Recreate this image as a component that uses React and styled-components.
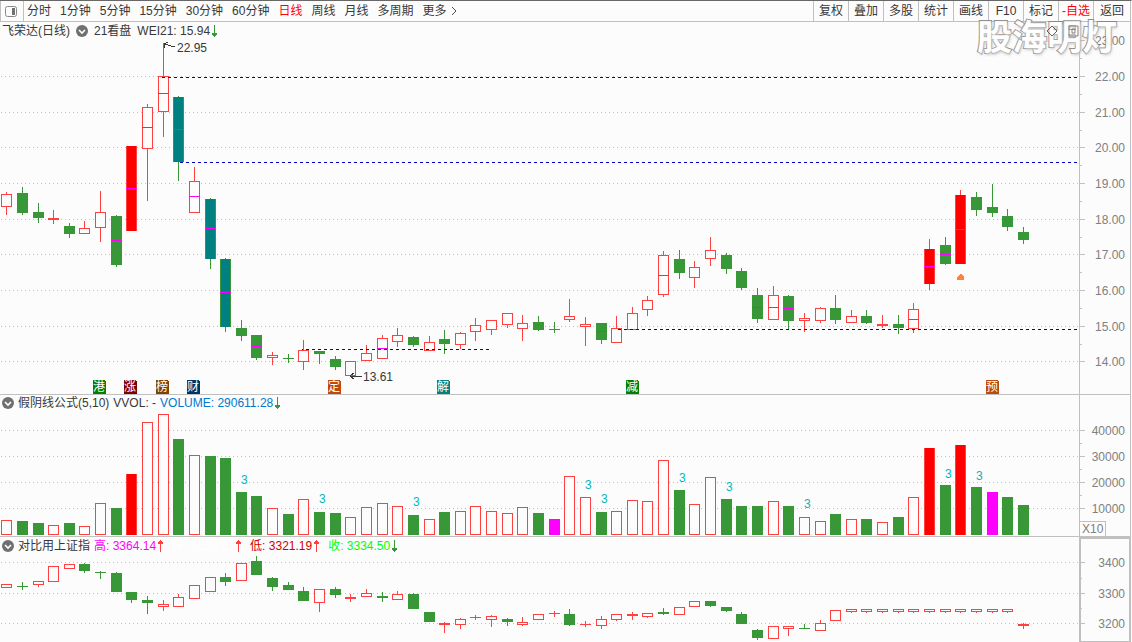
import React from "react";
import styled, { createGlobalStyle } from "styled-components";

const RED = "#ff4040";
const GREEN = "#389838";
const BG = "#fcfcfc";
const LINE = "#c0c0c0";
const MAGENTA = "#ff00ff";

const GlobalStyle = createGlobalStyle`
  * { box-sizing: border-box; }
  body {
    margin: 0;
    background: ${BG};
    color: #383838;
    font: 12px/16px "Liberation Sans", "Noto Sans CJK SC", sans-serif;
  }
`;

const Page = styled.main`
  position: relative;
  border-top: 1px solid #686868;
  border-right: 1px solid ${BG};
  overflow: hidden;
`;

const Frame = styled.div`
  border-right: 1px solid ${LINE};
`;

const Toolbar = styled.header`
  display: flex;
  height: 21px;
  border-bottom: 1px solid ${LINE};
  border-left: 1px solid ${LINE};
`;

const LayoutButton = styled.button`
  width: 23px;
  padding: 0 0 0 4px;
  border: 0;
  border-right: 1px solid ${LINE};
  background: none;
  display: flex;
  align-items: center;
`;

const Periods = styled.nav`
  display: flex;
  flex: 1;
  gap: 9px;
  padding-left: 3px;
`;

const PeriodButton = styled.button`
  display: flex;
  align-items: center;
  gap: 4px;
  padding: 0;
  border: 0;
  background: none;
  font: inherit;
  white-space: nowrap;
  color: ${(p) => (p.$active ? "#ff0000" : "inherit")};
`;

const Tools = styled.div`
  display: flex;
`;

const ToolButton = styled.button`
  width: 35px;
  padding: 0;
  border: 0;
  border-left: 1px solid ${LINE};
  background: none;
  font: inherit;
  white-space: nowrap;
  color: ${(p) => (p.$alert ? "#ff0000" : "inherit")};
  &:last-child { width: 37px; }
`;

const Panel = styled.section`
  display: flex;
  border-bottom: ${(p) => (p.$last ? "0" : `1px solid ${LINE}`)};
`;

const Plot = styled.div`
  flex: 1;
  min-width: 0;
`;

const PanelHeader = styled.div`
  display: flex;
  align-items: center;
  height: ${(p) => p.$height}px;
  gap: ${(p) => p.$gap || 4}px;
  padding-left: 2px;
  white-space: nowrap;
`;

const Name = styled.span`
  color: inherit;
`;

const CollapseButton = styled.button`
  display: flex;
  padding: 0;
  border: 0;
  background: none;
`;

const Reading = styled.span`
  display: flex;
  align-items: center;
  color: ${(p) => p.$color || "inherit"};
  margin-right: ${(p) => (p.$spaced ? 3 : 0)}px;
`;

const Drawing = styled.svg`
  display: block;
  width: 100%;
  height: ${(p) => p.$height}px;
  shape-rendering: crispEdges;
  text { font-size: 12px; }
`;

const Axis = styled.div`
  width: 51px;
  border: 0 solid ${LINE};
  border-width: ${(p) => (p.$boxed ? "2px 1px 1px 2px" : "0 0 0 1px")};
`;

const Watermark = styled.div`
  position: absolute;
  top: 14px;
  right: 14px;
  font: 700 35px/40px "Noto Sans CJK SC", sans-serif;
  color: #ffffff;
  -webkit-text-stroke: 2px #7c7c7c;
  paint-order: stroke fill;
  text-shadow: 1px 2px 3px #c0c0c0;
  opacity: 0.85;
  pointer-events: none;
`;

const FloatingMarks = styled.svg`
  position: absolute;
  top: 22px;
  right: 49px;
`;

const slot = (i) => Math.floor((175 + i * 1564) / 100);

/* kind, high, body top, body bottom, low, optional midpoint mark */
const prices = [
  ["r", 192, 194, 207, 215], ["g", 187, 193, 213, 215], ["g", 203, 212, 218, 223],
  ["r", 210, 218, 220, 224], ["g", 223, 226, 234, 238], ["r", 221, 228, 234, 234],
  ["r", 191, 212, 228, 242], ["g", 215, 216, 265, 267, 240], ["R", 146, 146, 231, 231, 188],
  ["r", 104, 107, 149, 201, 127], ["r", 43, 76, 112, 137, 93], ["T", 96, 97, 162, 181, 129],
  ["r", 167, 181, 213, 213, 196], ["T", 198, 199, 259, 269, 228], ["T", 258, 259, 327, 332, 292],
  ["g", 320, 328, 336, 341], ["g", 335, 335, 358, 360, 346], ["r", 352, 355, 358, 365],
  ["g", 354, 358, 359, 363], ["r", 340, 350, 362, 370], ["g", 351, 351, 354, 364],
  ["g", 356, 359, 367, 370], ["r", 361, 361, 376, 376], ["r", 345, 353, 361, 361],
  ["r", 335, 338, 359, 359, 348], ["r", 328, 335, 342, 347], ["g", 336, 337, 345, 347],
  ["r", 336, 342, 351, 351], ["g", 330, 339, 344, 354], ["r", 332, 333, 345, 349],
  ["r", 318, 325, 332, 341], ["r", 320, 320, 330, 335], ["r", 313, 313, 325, 328],
  ["r", 315, 323, 329, 341], ["g", 316, 322, 330, 331], ["g", 322, 329, 330, 333],
  ["r", 299, 316, 320, 322], ["r", 317, 324, 327, 346], ["g", 323, 323, 340, 344, 331],
  ["r", 316, 328, 343, 343], ["r", 307, 313, 330, 330], ["r", 296, 300, 310, 316],
  ["r", 251, 255, 295, 297, 275], ["g", 250, 259, 273, 279], ["r", 261, 267, 278, 288],
  ["r", 237, 250, 259, 266], ["g", 253, 255, 269, 274], ["g", 268, 271, 288, 290],
  ["g", 288, 295, 319, 323, 307], ["r", 286, 295, 320, 320, 307], ["g", 295, 296, 321, 329, 308],
  ["r", 313, 318, 321, 332], ["r", 307, 308, 321, 323], ["g", 295, 308, 320, 324],
  ["r", 310, 316, 323, 323], ["g", 310, 316, 323, 324], ["r", 315, 324, 326, 328],
  ["g", 315, 324, 328, 334], ["r", 303, 309, 329, 333, 319], ["R", 239, 249, 284, 290, 266],
  ["g", 237, 245, 264, 265, 254], ["R", 190, 195, 264, 264, 229], ["g", 192, 197, 210, 216],
  ["g", 184, 207, 213, 217], ["g", 209, 216, 227, 231], ["g", 227, 232, 240, 244],
];

/* kind, bar top */
const volumes = [
  ["r", 520], ["g", 521], ["g", 523], ["r", 525], ["g", 523], ["r", 526], ["r", 503], ["g", 508],
  ["R", 474], ["r", 422], ["r", 414], ["g", 439], ["r", 455], ["g", 456], ["g", 458], ["g", 492],
  ["g", 496], ["r", 508], ["g", 514], ["r", 499], ["g", 512], ["g", 513], ["r", 517], ["r", 507],
  ["r", 503], ["r", 506], ["g", 515], ["r", 519], ["g", 512], ["r", 511], ["r", 506], ["r", 511],
  ["r", 513], ["r", 507], ["g", 513], ["M", 519], ["r", 476], ["r", 497], ["g", 512], ["r", 511],
  ["r", 500], ["r", 501], ["r", 460], ["g", 490], ["r", 504], ["r", 477], ["g", 499], ["g", 506],
  ["g", 506], ["r", 501], ["g", 506], ["r", 517], ["r", 521], ["g", 514], ["r", 519], ["g", 519],
  ["r", 522], ["g", 517], ["r", 497], ["R", 448], ["g", 485], ["R", 445], ["g", 487], ["M", 492],
  ["g", 497], ["g", 505],
];

const threes = [
  [15, 484], [20, 503], [26, 506], [37, 489], [38, 503],
  [43, 482], [46, 491], [51, 508], [60, 478], [62, 480],
];

const indexCandles = [
  ["r", 584, 584, 588, 588], ["g", 582, 586, 587, 590], ["r", 581, 581, 585, 587],
  ["r", 566, 566, 582, 582], ["r", 564, 564, 569, 569], ["g", 563, 564, 571, 573],
  ["g", 571, 572, 573, 579], ["g", 572, 573, 592, 592], ["g", 592, 592, 600, 603],
  ["g", 596, 600, 603, 614], ["r", 600, 604, 607, 611], ["r", 594, 597, 607, 607],
  ["r", 585, 585, 599, 599], ["r", 577, 577, 592, 592], ["g", 573, 577, 582, 586],
  ["r", 563, 563, 581, 581], ["g", 556, 561, 575, 575], ["g", 577, 578, 587, 591],
  ["g", 582, 585, 590, 590], ["g", 587, 591, 601, 601], ["r", 589, 589, 603, 612],
  ["g", 587, 589, 595, 598], ["r", 594, 597, 599, 602], ["r", 589, 593, 597, 597],
  ["g", 592, 596, 598, 602], ["r", 591, 594, 600, 600], ["g", 593, 594, 609, 609],
  ["g", 612, 612, 622, 622], ["r", 622, 623, 625, 633], ["r", 618, 619, 625, 629],
  ["r", 615, 617, 618, 620], ["r", 615, 616, 620, 627], ["g", 618, 619, 622, 626],
  ["r", 617, 622, 625, 626], ["r", 614, 614, 620, 620], ["r", 611, 613, 614, 617],
  ["g", 609, 614, 625, 626], ["r", 621, 624, 625, 627], ["r", 616, 619, 626, 629],
  ["r", 614, 614, 620, 621], ["r", 612, 614, 616, 620], ["r", 613, 613, 617, 618],
  ["g", 608, 612, 614, 615], ["r", 607, 607, 615, 615], ["r", 601, 601, 607, 607],
  ["g", 601, 601, 606, 607], ["g", 607, 607, 611, 612], ["g", 612, 614, 624, 624],
  ["g", 629, 630, 638, 640], ["r", 626, 626, 639, 639], ["r", 626, 626, 629, 636],
  ["g", 624, 628, 629, 629], ["r", 620, 623, 631, 631], ["r", 610, 610, 621, 621],
  ["r", 609, 609, 612, 613],
  ...Array.from({ length: 10 }, () => ["r", 609, 609, 612, 613]),
  ["r", 623, 624, 626, 629],
];

const badges = [
  [93, "港", "#008000"], [124, "涨", "#800000"], [156, "榜", "#804000"], [187, "财", "#003468"],
  [328, "定", "#c04808"], [437, "解", "#008080"], [626, "减", "#008000"], [986, "预", "#c04808"],
];

const supportLines = [[162, 77], [177, 162], [302, 349, 188], [615, 329]];

function Body({ kind, x, top, bottom }) {
  const h = bottom - top;
  if (kind === "r") {
    return (
      <>
        <rect x={x} y={top} width="11" height={h} fill={RED} />
        {h > 2 && <rect x={x + 1} y={top + 1} width="9" height={h - 2} fill={BG} />}
      </>
    );
  }
  if (kind === "R" || kind === "T") {
    return (
      <>
        <rect x={x} y={top} width="11" height={h} fill={kind === "R" ? RED : GREEN} />
        <rect x={x + 1} y={top} width="9" height={h} fill={kind === "R" ? "#ff0000" : "#008080"} />
      </>
    );
  }
  return <rect x={x} y={top} width="11" height={h} fill={kind === "M" ? MAGENTA : GREEN} />;
}

function Candle({ index, data }) {
  const [kind, high, top, bottom, low, mark] = data;
  const x = slot(index);
  const wick = kind === "r" || kind === "R" ? RED : GREEN;
  return (
    <g>
      <rect x={x + 5} y={high} width="1" height={low - high} fill={wick} />
      <Body kind={kind} x={x} top={top} bottom={bottom} />
      {mark && <rect x={x} y={mark} width="11" height="1" fill={MAGENTA} />}
    </g>
  );
}

function Grid({ id, rows }) {
  return (
    <>
      <defs>
        <pattern id={id} width="4" height="1" patternUnits="userSpaceOnUse">
          <rect x="1" width="1" height="1" fill={LINE} />
        </pattern>
      </defs>
      {rows.map((y) => (
        <rect key={y} y={y} width="100%" height="1" fill={`url(#${id})`} />
      ))}
    </>
  );
}

function Scale({ height, offset, inset = 0, major, minor, children }) {
  return (
    <Drawing $height={height}>
      <g transform={`translate(${-inset} ${-offset})`}>
        {major.map(([y, label]) => (
          <React.Fragment key={label}>
            <rect x="0" y={y} width="5" height="1" fill={LINE} />
            <text x="45" y={y + 5} textAnchor="end" fill="#808080">{label}</text>
          </React.Fragment>
        ))}
        {minor.map((y) => (
          <rect key={y} x="0" y={y} width="2" height="1" fill={LINE} />
        ))}
        {children}
      </g>
    </Drawing>
  );
}

function Collapse({ label }) {
  return (
    <CollapseButton aria-label={label}>
      <svg width="12" height="12" viewBox="0 0 12 12">
        <circle cx="6" cy="6" r="6" fill="#707070" />
        <path d="M3 5l3 3 3-3" fill="none" stroke="#fff" strokeWidth="1.6" />
      </svg>
    </CollapseButton>
  );
}

function Trend({ up }) {
  return (
    <svg width="9" height="14" viewBox="0 0 9 14">
      <path
        d={up ? "M4 1h1v1h1v1h1v2H5v8H4V5H2V3h1V2h1z" : "M4 1h1v8h2v2H6v1H5v1H4v-1H3v-1H2V9h2z"}
        fill={up ? RED : GREEN}
        shapeRendering="crispEdges"
      />
    </svg>
  );
}

const periods = ["分时", "1分钟", "5分钟", "15分钟", "30分钟", "60分钟", "日线", "周线", "月线", "多周期"];
const tools = ["复权", "叠加", "多股", "统计", "画线", "F10", "标记", "-自选", "返回"];
const priceRows = [[40, "23.00"], [76, "22.00"], [112, "21.00"], [147, "20.00"], [183, "19.00"], [219, "18.00"], [254, "17.00"], [290, "16.00"], [326, "15.00"], [361, "14.00"]];
const volumeRows = [[430, "40000"], [456, "30000"], [482, "20000"], [508, "10000"]];
const indexRows = [[562, "3400"], [593, "3300"], [623, "3200"]];

export default function App() {
  return (
    <Page>
      <GlobalStyle />
      <Frame>
        <Toolbar>
          <LayoutButton aria-label="切换侧栏">
            <svg width="12" height="11" viewBox="0 0 12 11">
              <rect x="0.5" y="0.5" width="11" height="10" rx="2" fill="none" stroke="#888" />
              <path d="M7 2h3v7H7z" fill="#707070" />
            </svg>
          </LayoutButton>
          <Periods>
            {periods.map((p) => (
              <PeriodButton key={p} $active={p === "日线"}>{p}</PeriodButton>
            ))}
            <PeriodButton>
              更多
              <svg width="6" height="10" viewBox="0 0 6 10">
                <path d="M1 1l4 4-4 4" fill="none" stroke="#505050" />
              </svg>
            </PeriodButton>
          </Periods>
          <Tools>
            {tools.map((t) => (
              <ToolButton key={t} $alert={t === "-自选"}>{t}</ToolButton>
            ))}
          </Tools>
        </Toolbar>

        <Panel>
          <Plot>
            <PanelHeader $height={18} $gap={6}>
              <Name>飞荣达(日线)</Name>
              <Collapse label="收起主图指标" />
              <Name>21看盘</Name>
              <Reading>WEI21: 15.94<Trend /></Reading>
            </PanelHeader>
            <Drawing $height={354}>
              <defs>
                <pattern id="dash" width="6" height="1" patternUnits="userSpaceOnUse">
                  <rect width="3" height="1" fill="#0000c8" />
                </pattern>
              </defs>
              <g transform="translate(0 -40)">
                <Grid id="price-grid" rows={priceRows.slice(1).map((r) => r[0])} />
                {prices.map((c, i) => <Candle key={i} index={i} data={c} />)}
                {supportLines.map(([x, y, w]) => (
                  <rect key={y} x={x} y={y} width={w || "100%"} height="1" fill="url(#dash)" />
                ))}
                <g stroke="#383838" fill="none">
                  <path d="M164 44l11 3M164 44l4-2M164 44l1 4" />
                  <path d="M350 376h12M350 376l4-3M350 376l4 3" />
                </g>
                <g fill="#383838">
                  <text x="177" y="52">22.95</text>
                  <text x="363" y="381">13.61</text>
                </g>
                <path d="M957 280v-3l3-3h1l3 3v3z" fill="#ff8040" />
                {badges.map(([x, label, color]) => (
                  <g key={x}>
                    <path d={`M${x} 380h11l2 2v12h-13z`} fill={color} />
                    <text x={x} y="391" fill="#fff">{label}</text>
                  </g>
                ))}
              </g>
            </Drawing>
          </Plot>
          <Axis>
            <Scale height={372} offset={22} major={priceRows} minor={[58, 94, 130, 165, 201, 237, 272, 308, 344]} />
          </Axis>
        </Panel>

        <Panel>
          <Plot>
            <PanelHeader $height={16}>
              <Collapse label="收起成交量" />
              <Name>假阴线公式(5,10)</Name>
              <Reading>VVOL: -</Reading>
              <Reading $color="#0078d0">VOLUME: 290611.28<Trend /></Reading>
            </PanelHeader>
            <Drawing $height={125}>
              <g transform="translate(0 -411)">
                <Grid id="volume-grid" rows={volumeRows.map((r) => r[0])} />
                {volumes.map(([kind, top], i) => (
                  <Body key={i} kind={kind} x={slot(i)} top={top} bottom={535} />
                ))}
                {threes.map(([i, y]) => (
                  <text key={i} x={slot(i) + 5} y={y} fill="#00b8c0">3</text>
                ))}
              </g>
            </Drawing>
          </Plot>
          <Axis>
            <Scale height={141} offset={395} major={volumeRows} minor={[443, 469, 495]}>
              <path d="M0 521h26v15h-1v-14h-25z" fill={LINE} />
              <text x="2" y="533" fill="#808080">X10</text>
            </Scale>
          </Axis>
        </Panel>

        <Panel $last>
          <Plot>
            <PanelHeader $height={18}>
              <Collapse label="收起对比指标" />
              <Name>对比用上证指</Name>
              <Reading $spaced $color="#ff00ff">高: 3364.14<Trend up /></Reading>
              <Reading $spaced $color="#ffffff">开: 3350.65<Trend up /></Reading>
              <Reading $spaced $color="#d00000">低: 3321.19<Trend up /></Reading>
              <Reading $color="#00ff00">收: 3334.50<Trend /></Reading>
            </PanelHeader>
            <Drawing $height={87}>
              <g transform="translate(0 -555)">
                <Grid id="index-grid" rows={indexRows.map((r) => r[0])} />
                {indexCandles.map((c, i) => <Candle key={i} index={i} data={c} />)}
              </g>
            </Drawing>
          </Plot>
          <Axis $boxed>
            <Scale height={102} offset={539} inset={1} major={indexRows} minor={[578, 608]} />
          </Axis>
        </Panel>
      </Frame>
      <Watermark>股海明灯</Watermark>
      <FloatingMarks width="38" height="16" viewBox="0 0 38 16">
        <path d="M8 3l5 5-5 5-5-5z" fill="none" stroke="#606060" />
        <path d="M25 3h9v10h-9zM28 6h3v4h-3z" fill="none" stroke="#808080" />
      </FloatingMarks>
    </Page>
  );
}
